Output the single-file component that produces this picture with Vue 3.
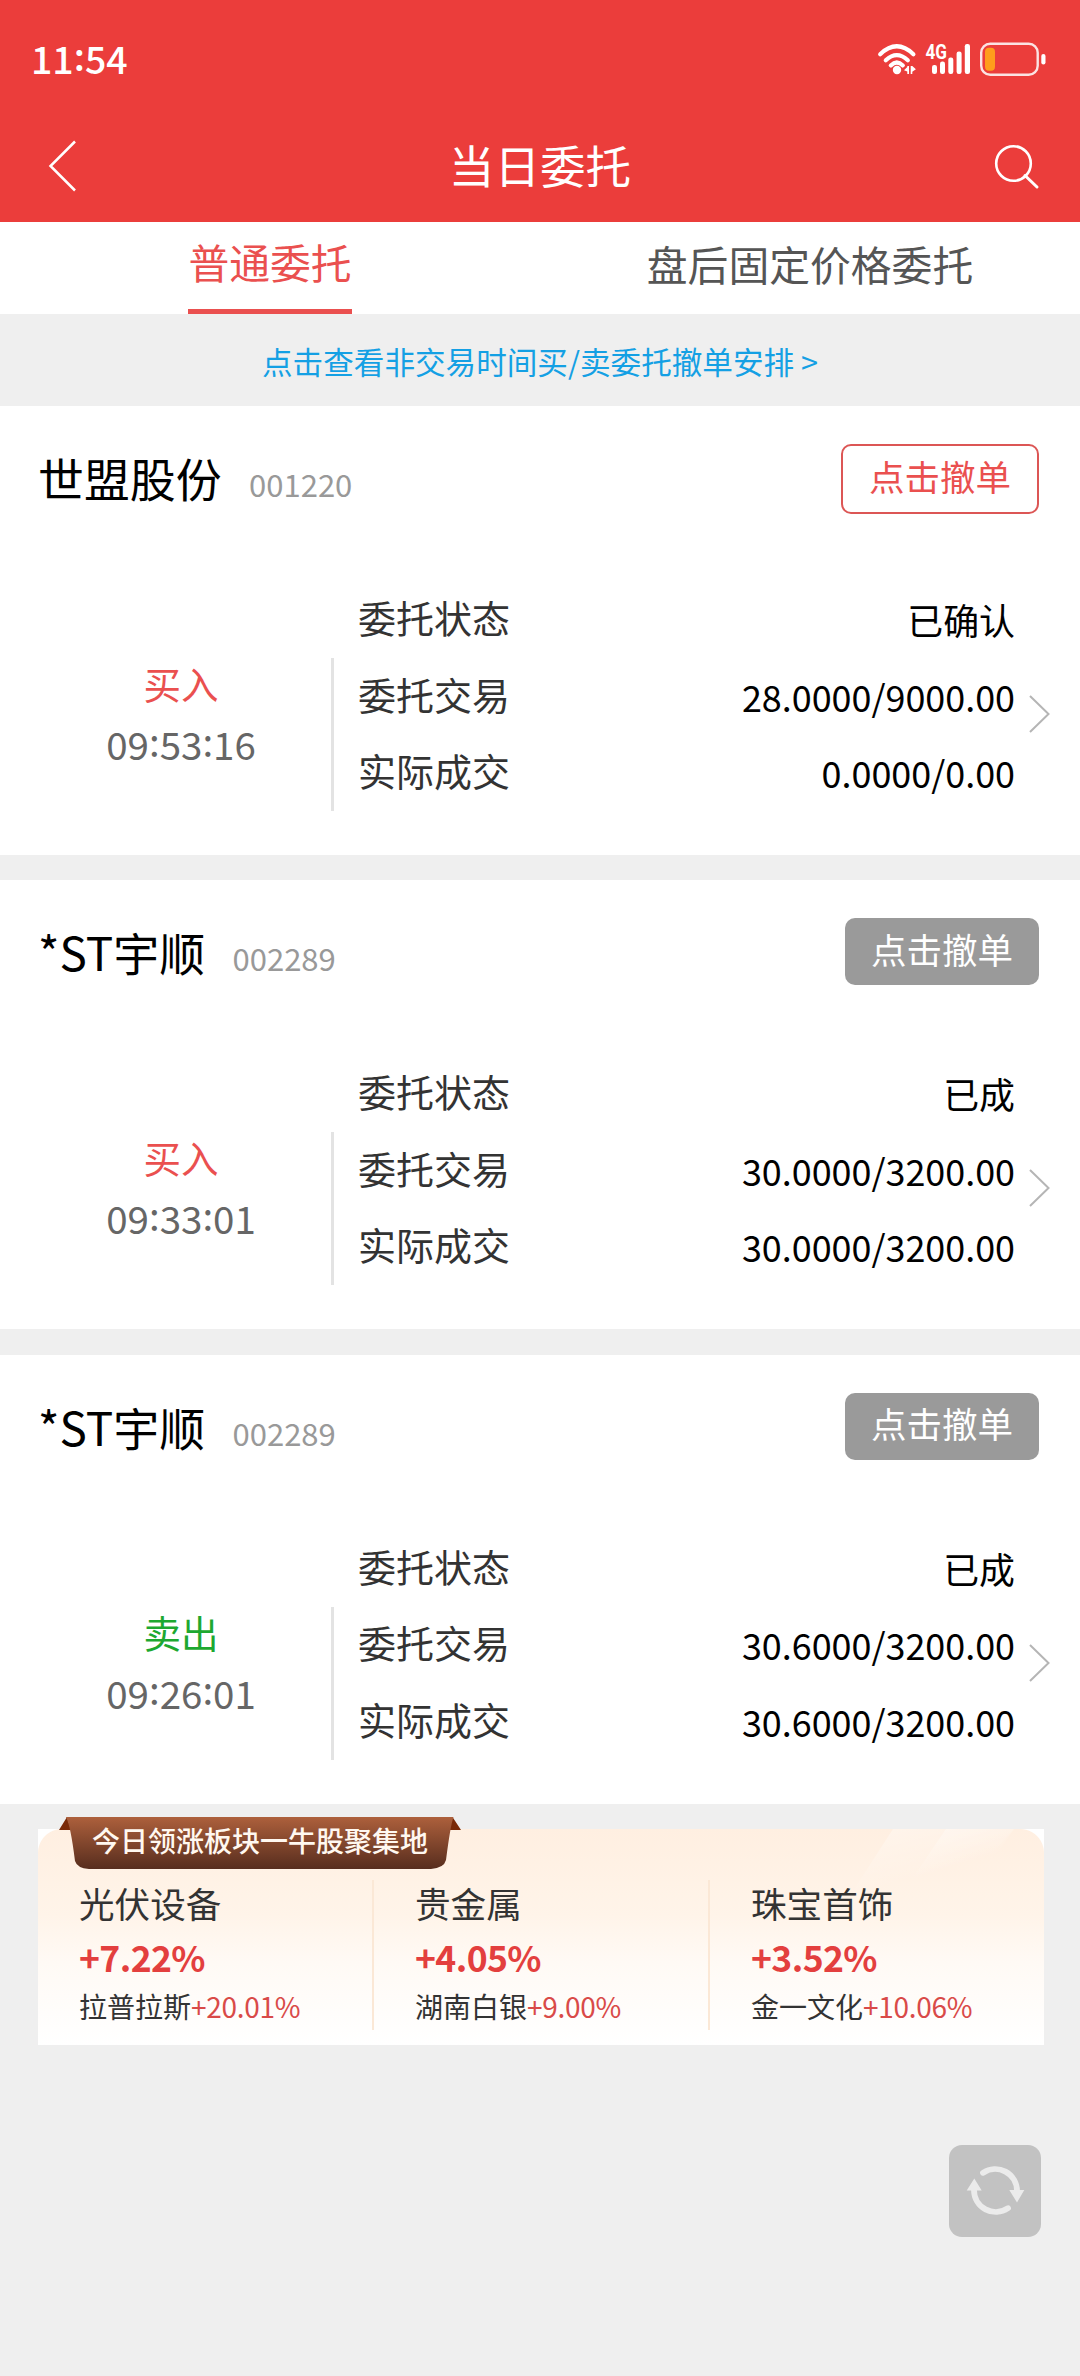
<script setup>
const tabs = [
  { label: '普通委托', active: true },
  { label: '盘后固定价格委托', active: false }
]

const orders = [
  {
    name: '世盟股份', code: '001220', cancellable: true,
    side: '买入', sell: false, time: ['09', '53', '16'],
    rows: [
      { label: '委托状态', value: '已确认' },
      { label: '委托交易', value: '28.0000/9000.00' },
      { label: '实际成交', value: '0.0000/0.00' }
    ]
  },
  {
    name: '*ST宇顺', code: '002289', cancellable: false,
    side: '买入', sell: false, time: ['09', '33', '01'],
    rows: [
      { label: '委托状态', value: '已成' },
      { label: '委托交易', value: '30.0000/3200.00' },
      { label: '实际成交', value: '30.0000/3200.00' }
    ]
  },
  {
    name: '*ST宇顺', code: '002289', cancellable: false,
    side: '卖出', sell: true, time: ['09', '26', '01'],
    rows: [
      { label: '委托状态', value: '已成' },
      { label: '委托交易', value: '30.6000/3200.00' },
      { label: '实际成交', value: '30.6000/3200.00' }
    ]
  }
]

const sectors = [
  { name: '光伏设备', change: '+7.22%', stock: '拉普拉斯', stockChange: '+20.01%' },
  { name: '贵金属', change: '+4.05%', stock: '湖南白银', stockChange: '+9.00%' },
  { name: '珠宝首饰', change: '+3.52%', stock: '金一文化', stockChange: '+10.06%' }
]
</script>

<template>
  <div class="screen">
    <header class="top">
      <div class="status">
        <div class="clock">11<span class="colon">:</span>54</div>
        <svg class="indicators" width="170" height="36" viewBox="0 0 170 36">
          <g fill="none" stroke="#fff" stroke-linecap="round" stroke-width="4.2">
            <path d="M4.2 12.2Q20.800-3.600 37.400 12.200" />
            <path d="M9.800 18.200Q20.800 8 31.800 18.200" />
            <path d="M14.800 23.400Q20.800 17.600 26.800 23.400" />
          </g>
          <circle cx="21" cy="28" r="4.2" fill="#fff" />
          <path d="M33 24v8h-1.7v-2.6L28 28.3l3.3-3.3V24zM34.7 24h1.6l3.6 3.2-3.6 2.6V32h-1.6z" fill="#fff" />
          <text x="49.5" y="16.800" class="net" textLength="21.5" lengthAdjust="spacingAndGlyphs">4G</text>
          <g fill="#fff">
            <rect x="56" y="23" width="5" height="9" rx="2.2" />
            <rect x="64" y="19.5" width="5" height="12.5" rx="2.2" />
            <rect x="72.3" y="15.5" width="5" height="16.5" rx="2.2" />
            <rect x="80.6" y="9.5" width="5" height="22.5" rx="2.2" />
            <rect x="88.8" y="2" width="5.2" height="30" rx="2.2" />
          </g>
          <rect x="105.2" y="1.7" width="56.5" height="31" rx="9" fill="none" stroke="#fbe3e3" stroke-width="2.4" />
          <rect x="109" y="5.7" width="10" height="23" rx="4" fill="#ff9d1c" />
          <rect x="165.3" y="12" width="4.2" height="10.5" rx="2.1" fill="#fff" />
        </svg>
      </div>
      <div class="nav">
        <svg class="back" width="32" height="54" viewBox="0 0 32 54">
          <path d="M29 2.5L4.500 27L29 51.5" fill="none" stroke="#fff" stroke-width="2.5" />
        </svg>
        <h1>当日委托</h1>
        <svg class="search" width="48" height="50" viewBox="0 0 48 50">
          <circle cx="20.5" cy="20.5" r="17.3" fill="none" stroke="#fff" stroke-width="2.6" />
          <path d="M32 32.5L44 44" stroke="#fff" stroke-width="3" stroke-linecap="round" />
        </svg>
      </div>
    </header>

    <nav class="tabs">
      <div v-for="t in tabs" :key="t.label" class="tab">
        <span class="tab-label" :class="{ active: t.active }">{{ t.label }}</span>
      </div>
    </nav>

    <a class="notice">点击查看非交易时间买/卖委托撤单安排 &gt;</a>

    <main class="orders">
      <section v-for="(o, i) in orders" :key="i" class="order">
        <div class="head">
          <div class="title">
            <span class="name">{{ o.name }}</span>
            <span class="code">{{ o.code }}</span>
          </div>
          <button class="cancel" :class="{ disabled: !o.cancellable }">点击撤单</button>
        </div>
        <div class="body">
          <div class="deal">
            <div class="side" :class="{ sell: o.sell }">{{ o.side }}</div>
            <div class="time">{{ o.time[0] }}<span class="colon">:</span>{{ o.time[1] }}<span class="colon">:</span>{{ o.time[2] }}</div>
          </div>
          <div class="rule"></div>
          <div class="rows">
            <div v-for="r in o.rows" :key="r.label" class="row">
              <span class="label">{{ r.label }}</span>
              <span class="value">{{ r.value }}</span>
            </div>
          </div>
          <svg class="more" width="24" height="40" viewBox="0 0 24 40">
            <path d="M2 2L20.5 20L2 38" fill="none" stroke="#b5b5b5" stroke-width="2" />
          </svg>
        </div>
      </section>
    </main>

    <section class="promo">
      <div class="panel">
        <svg class="shine" width="200" height="75" viewBox="0 0 200 75">
          <defs>
            <linearGradient id="shine" x1="0" y1="0" x2="0.7" y2="1">
              <stop offset="0" stop-color="#fff" stop-opacity="0.4" />
              <stop offset="0.7" stop-color="#fff" stop-opacity="0" />
            </linearGradient>
          </defs>
          <path d="M49 0H170L125 65H7Z" fill="url(#shine)" />
          <path d="M102 0H170L125 50H68Z" fill="url(#shine)" />
        </svg>
        <div v-for="s in sectors" :key="s.name" class="sector">
          <div class="sector-name">{{ s.name }}</div>
          <div class="sector-change">{{ s.change }}</div>
          <div class="sector-stock">{{ s.stock }}<span class="up">{{ s.stockChange }}</span></div>
        </div>
      </div>
      <div class="ribbon">
        <svg class="ribbon-bg" width="402" height="52" viewBox="0 0 402 52">
          <defs>
            <linearGradient id="ribbon" x1="0" y1="0" x2="0" y2="1">
              <stop offset="0" stop-color="#ad603c" />
              <stop offset="1" stop-color="#572d1e" />
            </linearGradient>
          </defs>
          <path d="M0 13L8 0L12 13ZM402 13L393.5 0L390 13Z" fill="#7a2a08" />
          <path d="M7 0H394.5Q391.5 8 387 43Q385 51 372 52H30Q18 51 16 44Q11.5 8 7 0Z" fill="url(#ribbon)" />
        </svg>
        <span class="ribbon-text">今日领涨板块一牛股聚集地</span>
      </div>
    </section>

    <button class="refresh">
      <svg width="92" height="92" viewBox="0 0 92 92">
        <g fill="none" stroke="#ebebeb" stroke-width="5.8" stroke-linecap="round">
          <path d="M34 27.8A21.8 21.8 0 0 1 68 46" />
          <path d="M59 63.2A21.8 21.8 0 0 1 25 45" />
        </g>
        <path d="M60.300 45H75.300L68 57.5ZM17.700 45.500H32.700L25.300 33.500Z" fill="#ebebeb" />
      </svg>
    </button>
  </div>
</template>

<style>
body {
  margin: 0;
  background: #efefef;
}
</style>

<style scoped>
.screen {
  position: relative;
  width: 1080px;
  height: 2376px;
  overflow: hidden;
  background: #efefef;
  font-family: "Noto Sans CJK SC", sans-serif;
}

.top {
  height: 222px;
  background: #eb3d3b;
  color: #fff;
}

.status {
  display: flex;
  justify-content: space-between;
  align-items: flex-start;
  height: 110px;
  padding: 0 34px 0 31px;
  box-sizing: border-box;
}

.clock {
  margin-top: 28px;
  font-size: 37.5px;
  font-weight: 500;
  line-height: 60px;
}

.indicators {
  display: block;
  margin-top: 42px;
  overflow: visible;
}

.net {
  font-family: Roboto, sans-serif;
  font-size: 20px;
  font-weight: 700;
  fill: #fff;
}

.colon {
  position: relative;
  top: -3.5px;
}

.nav {
  display: grid;
  grid-template-columns: 120px 1fr 120px;
  align-items: center;
  height: 112px;
}

.back {
  margin-left: 46px;
}

.nav h1 {
  margin: 0;
  padding-bottom: 5px;
  text-align: center;
  font-size: 45.6px;
  font-weight: 400;
  line-height: 60px;
}

.search {
  justify-self: end;
  margin: 4px 39px 0 0;
}

.tabs {
  display: grid;
  grid-template-columns: 1fr 1fr;
  height: 92px;
  background: #fff;
}

.tab {
  display: flex;
  justify-content: center;
}

.tab-label {
  height: 92px;
  box-sizing: border-box;
  padding-top: 2px;
  font-size: 40.8px;
  line-height: 80px;
  color: #555;
}

.tab-label.active {
  padding-top: 0;
  border-bottom: 5px solid #ea504f;
  color: #ea504f;
}

.notice {
  display: block;
  height: 92px;
  text-align: center;
  font-size: 30.6px;
  line-height: 94px;
  color: #14a0e4;
}

.orders {
  display: flex;
  flex-direction: column;
  gap: 25.3px;
}

.order {
  height: 449px;
  background: #fff;
}

.head {
  display: flex;
  justify-content: space-between;
  align-items: flex-start;
  height: 173px;
  box-sizing: border-box;
  padding: 38px 41px 0 38px;
}

.title {
  display: flex;
  align-items: baseline;
  gap: 27.5px;
  line-height: 66px;
}

.name {
  font-size: 45.9px;
  color: #000;
}

.code {
  font-size: 31px;
  color: #999;
}

.cancel {
  width: 198px;
  height: 70px;
  box-sizing: border-box;
  padding: 0 0 6px;
  border: 2px solid #dc5655;
  border-radius: 10px;
  background: #fff;
  font-family: inherit;
  font-size: 35.5px;
  line-height: 58px;
  color: #ea504f;
}

.cancel.disabled {
  width: 194px;
  height: 67px;
  border: 0;
  background: #9a9a9a;
  color: #fff;
}

.body {
  display: flex;
  height: 232px;
}

.deal {
  width: 331px;
  padding: 77px 0 0 31px;
  box-sizing: border-box;
  text-align: center;
}

.side {
  height: 52px;
  font-size: 37.5px;
  line-height: 54px;
  color: #ea504f;
}

.side.sell {
  color: #1da830;
}

.time {
  font-size: 38.5px;
  line-height: 70px;
  color: #666;
}

.rule {
  width: 3px;
  height: 153px;
  margin-top: 79px;
  background: #e3e3e3;
}

.rows {
  width: 657px;
  padding-left: 24px;
}

.row {
  display: flex;
  justify-content: space-between;
  height: 76.5px;
  line-height: 76.5px;
}

.label {
  font-size: 38px;
  color: #333;
}

.value {
  padding-top: 2px;
  font-size: 35.9px;
  color: #000;
}

.more {
  margin: 115px 0 0 13px;
}

.promo {
  position: relative;
  padding: 25px 36px 0 38px;
}

.panel {
  position: relative;
  display: grid;
  grid-template-columns: repeat(3, 336px);
  height: 216px;
  overflow: hidden;
  background:
    linear-gradient(180deg, #ffefe1 0%, #fff4e9 40%, #fffaf5 62%, #fff 100%);
}

.panel::before,
.panel::after {
  content: "";
  position: absolute;
  top: 0;
  width: 24px;
  height: 24px;
}

.panel::before {
  left: 0;
  background: radial-gradient(circle at 100% 100%, transparent 23.5px, #fff 24.5px);
}

.panel::after {
  right: 0;
  background: radial-gradient(circle at 0 100%, transparent 23.5px, #fff 24.5px);
}

.shine {
  position: absolute;
  top: 0;
  left: 806px;
}

.sector {
  position: relative;
  height: 150px;
  margin-top: 51px;
  padding-left: 41px;
  box-sizing: border-box;
  border-right: 2px solid #fbe8d6;
  white-space: nowrap;
}

.sector:last-child {
  border-right: 0;
}

.sector-name {
  font-size: 35.6px;
  line-height: 46px;
  color: #333;
}

.sector-change {
  font-size: 35.5px;
  font-weight: 700;
  line-height: 62px;
  letter-spacing: -0.6px;
  color: #e33f3e;
}

.sector-stock {
  font-size: 28px;
  line-height: 36px;
  color: #333;
}

.up {
  letter-spacing: -0.3px;
  color: #d94a48;
}

.ribbon {
  position: absolute;
  top: 13px;
  left: 59px;
  width: 402px;
  height: 52px;
  text-align: center;
}

.ribbon-bg {
  position: absolute;
  top: 0;
  left: 0;
}

.ribbon-text {
  position: relative;
  font-size: 28px;
  font-weight: 500;
  line-height: 46px;
  color: #fff8f0;
}

.refresh {
  position: absolute;
  top: 2145px;
  left: 949px;
  width: 92px;
  height: 92px;
  padding: 0;
  border: 0;
  border-radius: 13px;
  background: #c2c2c2;
}

.refresh svg {
  display: block;
}
</style>
